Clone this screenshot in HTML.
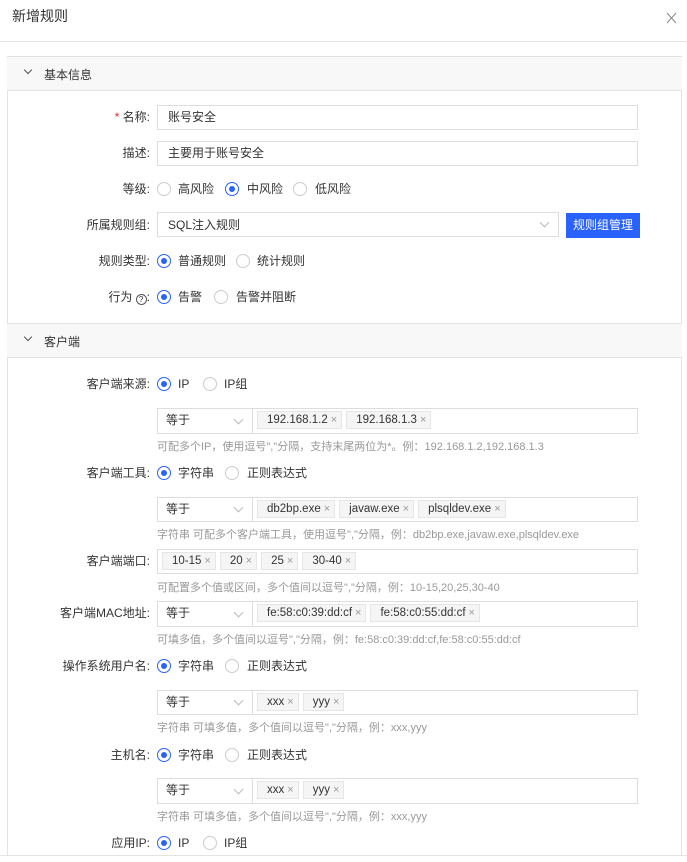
<!DOCTYPE html>
<html><head><meta charset="utf-8"><style>
*{box-sizing:border-box;margin:0;padding:0}
body{width:687px;height:862px;background:#fff;position:relative;overflow:hidden;font-family:"Liberation Sans","Noto Sans CJK SC",sans-serif;font-size:12px;color:#333}
.a{position:absolute;white-space:nowrap}
.lab{position:absolute;right:537px;white-space:nowrap;line-height:16px}
.r{position:absolute;width:14px;height:14px;border:1px solid #ccc;border-radius:50%;background:#fff}
.r.on{border-color:#2962ff}
.r.on::after{content:"";position:absolute;left:3px;top:3px;width:6px;height:6px;border-radius:50%;background:#2962ff}
.t{position:absolute;line-height:16px;white-space:nowrap}
.box{position:absolute;border:1px solid #ddd;background:#fff}
.sel{position:absolute;border:1px solid #ddd;background:#fff;line-height:23px;padding-left:8px}
.chev{position:absolute;width:7px;height:7px;border-right:1px solid #bbb;border-bottom:1px solid #bbb;transform:rotate(45deg)}
.tags{position:absolute;display:flex;gap:4px;padding:3px 0 0 5px}
.tag{height:18px;line-height:16px;background:#f5f5f5;border:1px solid #e6e6e6;padding:0 4px 0 9px;font-size:11.5px;color:#333;white-space:nowrap}
.tag b{font-weight:normal;color:#999;margin-left:3px;font-size:11px}
.hint{position:absolute;left:157px;color:#999;font-size:11px;line-height:14px;white-space:nowrap}
.sec{position:absolute;left:7px;width:675px;height:35px;background:#f8f8f8;border-top:1px solid #e3e3e3;border-bottom:1px solid #e3e3e3}
.sec span{position:absolute;left:37px;top:9px;font-size:12px}
.sec i{position:absolute;left:18px;top:10px;width:6px;height:6px;border-right:1px solid #555;border-bottom:1px solid #555;transform:rotate(45deg)}
</style></head><body>
<div class="a" style="left:12px;top:6px;font-size:14px;color:#333">新增规则</div>
<svg class="a" style="left:666px;top:12px" width="11" height="12" viewBox="0 0 11 12"><path d="M1 1L10 11M10 1L1 11" stroke="#888" stroke-width="1" fill="none"/></svg>
<div class="a" style="left:0;top:41px;width:687px;height:1px;background:#e5e5e5"></div>
<div class="a" style="left:7px;top:56px;width:1px;height:800px;background:#e3e3e3"></div>
<div class="a" style="left:681px;top:56px;width:1px;height:800px;background:#e3e3e3"></div>
<div class="a" style="left:0;top:855px;width:687px;height:1px;background:#e3e3e3"></div>

<div class="sec" style="top:56px"><i></i><span>基本信息</span></div>

<div class="lab" style="top:109px"><span style="color:#f5222d">*</span> 名称:</div>
<div class="box" style="left:157px;top:105px;width:481px;height:25px"><span class="t" style="left:10px;top:3px">账号安全</span></div>
<div class="lab" style="top:145px">描述:</div>
<div class="box" style="left:157px;top:141px;width:481px;height:25px"><span class="t" style="left:10px;top:3px">主要用于账号安全</span></div>

<div class="lab" style="top:181px">等级:</div>
<div class="r" style="left:157px;top:182px"></div><div class="t" style="left:178px;top:181px">高风险</div>
<div class="r on" style="left:225px;top:182px"></div><div class="t" style="left:247px;top:181px">中风险</div>
<div class="r" style="left:293px;top:182px"></div><div class="t" style="left:315px;top:181px">低风险</div>

<div class="lab" style="top:217px">所属规则组:</div>
<div class="box" style="left:157px;top:212px;width:402px;height:25px"><span class="t" style="left:10px;top:4px">SQL注入规则</span><div class="chev" style="left:383px;top:6px"></div></div>
<div class="a" style="left:566px;top:213px;width:74px;height:25px;background:#2962ff;color:#fff;line-height:25px;text-align:center">规则组管理</div>

<div class="lab" style="top:253px">规则类型:</div>
<div class="r on" style="left:157px;top:254px"></div><div class="t" style="left:178px;top:253px">普通规则</div>
<div class="r" style="left:236px;top:254px"></div><div class="t" style="left:257px;top:253px">统计规则</div>

<div class="lab" style="top:289px">行为 <span style="display:inline-block;width:11px;height:11px;border:1px solid #555;border-radius:50%;font-size:8px;line-height:9px;text-align:center;vertical-align:-1px">?</span>:</div>
<div class="r on" style="left:157px;top:290px"></div><div class="t" style="left:178px;top:289px">告警</div>
<div class="r" style="left:214px;top:290px"></div><div class="t" style="left:236px;top:289px">告警并阻断</div>

<div class="sec" style="top:323px"><i></i><span>客户端</span></div>

<div class="lab" style="top:376px">客户端来源:</div>
<div class="r on" style="left:157px;top:377px"></div><div class="t" style="left:178px;top:376px">IP</div>
<div class="r" style="left:203px;top:377px"></div><div class="t" style="left:224px;top:376px">IP组</div>

<div class="box" style="left:157px;top:408px;width:481px;height:26px"></div>
<div class="sel" style="left:157px;top:408px;width:96px;height:26px">等于<div class="chev" style="left:77px;top:7px"></div></div>
<div class="tags" style="left:252px;top:408px"><div class="tag">192.168.1.2<b>×</b></div><div class="tag">192.168.1.3<b>×</b></div></div>
<div class="hint" style="top:440px">可配多个IP，使用逗号","分隔，支持末尾两位为*。例：192.168.1.2,192.168.1.3</div>

<div class="lab" style="top:465px">客户端工具:</div>
<div class="r on" style="left:157px;top:466px"></div><div class="t" style="left:178px;top:465px">字符串</div>
<div class="r" style="left:225px;top:466px"></div><div class="t" style="left:247px;top:465px">正则表达式</div>

<div class="box" style="left:157px;top:497px;width:481px;height:25px"></div>
<div class="sel" style="left:157px;top:497px;width:96px;height:25px">等于<div class="chev" style="left:77px;top:6px"></div></div>
<div class="tags" style="left:252px;top:497px"><div class="tag">db2bp.exe<b>×</b></div><div class="tag">javaw.exe<b>×</b></div><div class="tag">plsqldev.exe<b>×</b></div></div>
<div class="hint" style="top:528px">字符串 可配多个客户端工具，使用逗号","分隔，例：db2bp.exe,javaw.exe,plsqldev.exe</div>

<div class="lab" style="top:553px">客户端端口:</div>
<div class="box" style="left:157px;top:549px;width:481px;height:25px"></div>
<div class="tags" style="left:157px;top:549px"><div class="tag">10-15<b>×</b></div><div class="tag">20<b>×</b></div><div class="tag">25<b>×</b></div><div class="tag">30-40<b>×</b></div></div>
<div class="hint" style="top:581px">可配置多个值或区间，多个值间以逗号","分隔，例：10-15,20,25,30-40</div>

<div class="lab" style="top:605px">客户端MAC地址:</div>
<div class="box" style="left:157px;top:601px;width:481px;height:26px"></div>
<div class="sel" style="left:157px;top:601px;width:96px;height:26px">等于<div class="chev" style="left:77px;top:7px"></div></div>
<div class="tags" style="left:252px;top:601px"><div class="tag">fe:58:c0:39:dd:cf<b>×</b></div><div class="tag">fe:58:c0:55:dd:cf<b>×</b></div></div>
<div class="hint" style="top:633px">可填多值，多个值间以逗号","分隔，例：fe:58:c0:39:dd:cf,fe:58:c0:55:dd:cf</div>

<div class="lab" style="top:658px">操作系统用户名:</div>
<div class="r on" style="left:157px;top:659px"></div><div class="t" style="left:178px;top:658px">字符串</div>
<div class="r" style="left:225px;top:659px"></div><div class="t" style="left:247px;top:658px">正则表达式</div>

<div class="box" style="left:157px;top:690px;width:481px;height:25px"></div>
<div class="sel" style="left:157px;top:690px;width:96px;height:25px">等于<div class="chev" style="left:77px;top:6px"></div></div>
<div class="tags" style="left:252px;top:690px"><div class="tag">xxx<b>×</b></div><div class="tag">yyy<b>×</b></div></div>
<div class="hint" style="top:721px">字符串 可填多值，多个值间以逗号","分隔，例：xxx,yyy</div>

<div class="lab" style="top:747px">主机名:</div>
<div class="r on" style="left:157px;top:748px"></div><div class="t" style="left:178px;top:747px">字符串</div>
<div class="r" style="left:225px;top:748px"></div><div class="t" style="left:247px;top:747px">正则表达式</div>

<div class="box" style="left:157px;top:778px;width:481px;height:26px"></div>
<div class="sel" style="left:157px;top:778px;width:96px;height:26px">等于<div class="chev" style="left:77px;top:7px"></div></div>
<div class="tags" style="left:252px;top:778px"><div class="tag">xxx<b>×</b></div><div class="tag">yyy<b>×</b></div></div>
<div class="hint" style="top:810px">字符串 可填多值，多个值间以逗号","分隔，例：xxx,yyy</div>

<div class="lab" style="top:835px">应用IP:</div>
<div class="r on" style="left:157px;top:836px"></div><div class="t" style="left:178px;top:835px">IP</div>
<div class="r" style="left:203px;top:836px"></div><div class="t" style="left:224px;top:835px">IP组</div>
</body></html>
